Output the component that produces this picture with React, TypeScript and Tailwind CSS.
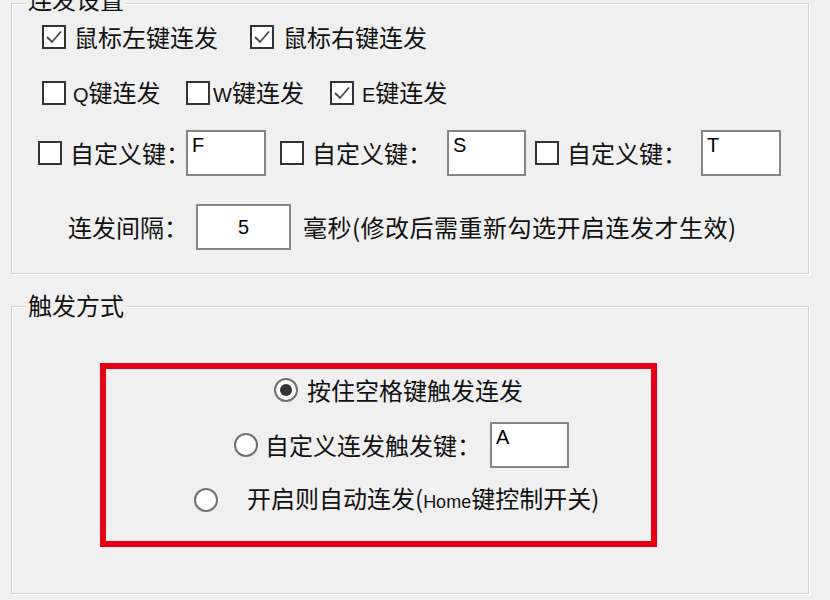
import React from "react";

function Check({ checked = false }: { checked?: boolean }) {
  return (
    <span className="flex h-[24px] w-[24px] shrink-0 items-center justify-center border-2 border-[#333333] bg-white">
      {checked && (
        <svg width="20" height="20" viewBox="0 0 20 20" fill="none">
          <path d="M3 10 L8 15 L17 4.5" stroke="#4a4a4a" strokeWidth="1.8" />
        </svg>
      )}
    </span>
  );
}

function Radio({ checked = false }: { checked?: boolean }) {
  return (
    <span className="flex h-[24px] w-[24px] shrink-0 items-center justify-center rounded-full border-2 border-[#707070] bg-white">
      {checked && <span className="h-[12px] w-[12px] rounded-full bg-[#333333]" />}
    </span>
  );
}

function KeyBox({ value, className = "" }: { value: string; className?: string }) {
  return (
    <span
      className={`h-[46px] shrink-0 border-2 border-[#858585] bg-white pl-[4px] pt-[2px] font-['Liberation_Sans',sans-serif] text-[20px] leading-[22px] text-black ${className}`}
    >
      {value}
    </span>
  );
}

const latin = "font-['Liberation_Sans',sans-serif] text-[20px]";

export default function App() {
  return (
    <div className="h-[600px] w-[830px] overflow-hidden bg-[#f0f0f0] pt-[3px] font-['Noto_Sans_CJK_SC','Noto_Sans',sans-serif] text-[24px] leading-[24px] text-[#111111]">
      {/* 连发设置 */}
      <div className="relative ml-[11px] h-[271px] w-[798px] border border-[#d4d4d4] shadow-[inset_1px_1px_0_#ffffff,1px_1px_0_#ffffff]">
        <span className="absolute left-[14px] top-[-17px] bg-[#f0f0f0] px-[2px] whitespace-nowrap">连发设置</span>

        <div className="mt-[10px] flex h-[46px] items-center">
          <span className="ml-[30px]"><Check checked /></span>
          <span className="ml-[8px] w-[144px] whitespace-nowrap">鼠标左键连发</span>
          <span className="ml-[32px]"><Check checked /></span>
          <span className="ml-[9px] whitespace-nowrap">鼠标右键连发</span>
        </div>

        <div className="mt-[10px] flex h-[46px] items-center">
          <span className="ml-[30px]"><Check /></span>
          <span className="ml-[7px] w-[113px] whitespace-nowrap"><span className={latin}>Q</span>键连发</span>
          <Check />
          <span className="ml-[3px] w-[117px] whitespace-nowrap"><span className={latin}>W</span>键连发</span>
          <Check checked />
          <span className="ml-[8px] whitespace-nowrap"><span className={latin}>E</span>键连发</span>
        </div>

        <div className="mt-[14px] flex h-[46px] items-center">
          <span className="ml-[26px]"><Check /></span>
          <span className="ml-[8px] w-[116px] whitespace-nowrap">自定义键：</span>
          <KeyBox value="F" className="w-[80px]" />
          <span className="ml-[14px]"><Check /></span>
          <span className="ml-[8px] w-[135px] whitespace-nowrap">自定义键：</span>
          <KeyBox value="S" className="w-[79px]" />
          <span className="ml-[9px]"><Check /></span>
          <span className="ml-[8px] w-[134px] whitespace-nowrap">自定义键：</span>
          <KeyBox value="T" className="w-[80px]" />
        </div>

        <div className="mt-[28px] flex h-[46px] items-center">
          <span className="ml-[56px] w-[128px] whitespace-nowrap">连发间隔：</span>
          <span className="flex h-[46px] w-[95px] items-center justify-center border-2 border-[#858585] bg-white font-['Liberation_Sans',sans-serif] text-[20px] text-black">
            5
          </span>
          <span className="ml-[12px] whitespace-nowrap tracking-[0.5px]">毫秒(修改后需重新勾选开启连发才生效)</span>
        </div>
      </div>

      {/* 触发方式 */}
      <div className="relative ml-[11px] mt-[32px] h-[288px] w-[798px] border border-[#d4d4d4] shadow-[inset_1px_1px_0_#ffffff,1px_1px_0_#ffffff]">
        <span className="absolute left-[14px] top-[-14px] bg-[#f0f0f0] px-[2px] whitespace-nowrap">触发方式</span>

        <div className="ml-[88px] mt-[56px] h-[184px] w-[557px] border-[6px] border-[#e60012]">
          <div className="mt-[1px] flex h-[40px] items-center">
            <span className="ml-[168px]"><Radio checked /></span>
            <span className="ml-[9px] whitespace-nowrap">按住空格键触发连发</span>
          </div>
          <div className="mt-[12px] flex h-[46px] items-center">
            <span className="ml-[128px]"><Radio /></span>
            <span className="ml-[7px] w-[225px] whitespace-nowrap">自定义连发触发键：</span>
            <KeyBox value="A" className="w-[79px]" />
          </div>
          <div className="mt-[12px] flex h-[40px] items-center">
            <span className="ml-[88px]"><Radio /></span>
            <span className="ml-[29px] whitespace-nowrap">
              开启则自动连发(<span className="font-['Liberation_Sans',sans-serif] text-[18px]">Home</span>键控制开关)
            </span>
          </div>
        </div>
      </div>
    </div>
  );
}
